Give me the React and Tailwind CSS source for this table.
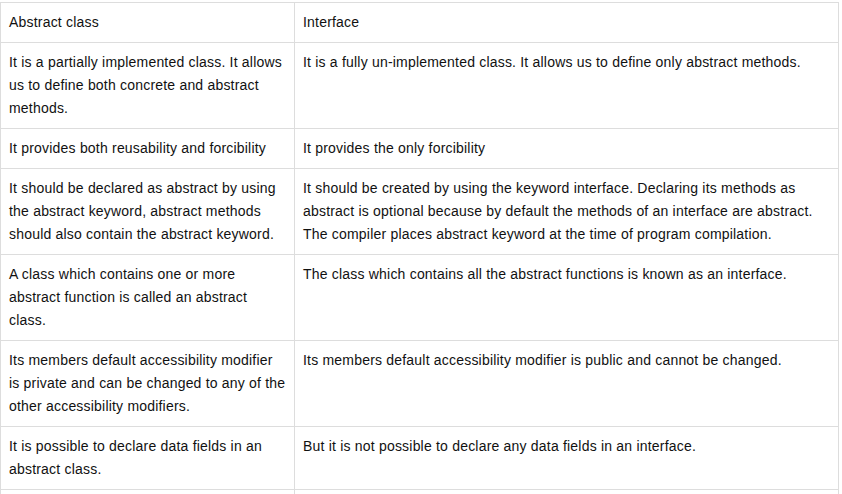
import React from 'react';

const rows = [
    {
        left: "It is a partially implemented class. It allows us to define both concrete and abstract methods.",
        right: "It is a fully un-implemented class. It allows us to define only abstract methods.",
    },
    {
        left: "It provides both reusability and forcibility",
        right: "It provides the only forcibility",
    },
    {
        left: "It should be declared as abstract by using the abstract keyword, abstract methods should also contain the abstract keyword.",
        right: "It should be created by using the keyword interface. Declaring its methods as abstract is optional because by default the methods of an interface are abstract. The compiler places abstract keyword at the time of program compilation.",
    },
    {
        left: "A class which contains one or more abstract function is called an abstract class.",
        right: "The class which contains all the abstract functions is known as an interface.",
    },
    {
        left: "Its members default accessibility modifier is private and can be changed to any of the other accessibility modifiers.",
        right: "Its members default accessibility modifier is public and cannot be changed.",
    },
    {
        left: "It is possible to declare data fields in an abstract class.",
        right: "But it is not possible to declare any data fields in an interface.",
    },
    { left: "", right: "" },
];

const cell = "border border-[#dddddd] px-2 py-2 align-top text-left font-normal";

function App() {
    return (
        <div className="bg-white h-[494px] overflow-hidden pt-[2px] font-['Liberation_Sans',Arial,sans-serif] text-[14px] leading-[23px] tracking-[0.2px] text-[#111111]">
            <table className="w-[839px] border-collapse table-fixed">
                <colgroup>
                    <col className="w-[294px]" />
                    <col />
                </colgroup>
                <thead>
                    <tr>
                        <th className={cell}>Abstract class</th>
                        <th className={cell}>Interface</th>
                    </tr>
                </thead>
                <tbody>
                    {rows.map((row, i) => (
                        <tr key={i} className={row.left ? "" : "h-[40px]"}>
                            <td className={cell}>{row.left}</td>
                            <td className={cell}>{row.right}</td>
                        </tr>
                    ))}
                </tbody>
            </table>
        </div>
    );
}

export default App;
